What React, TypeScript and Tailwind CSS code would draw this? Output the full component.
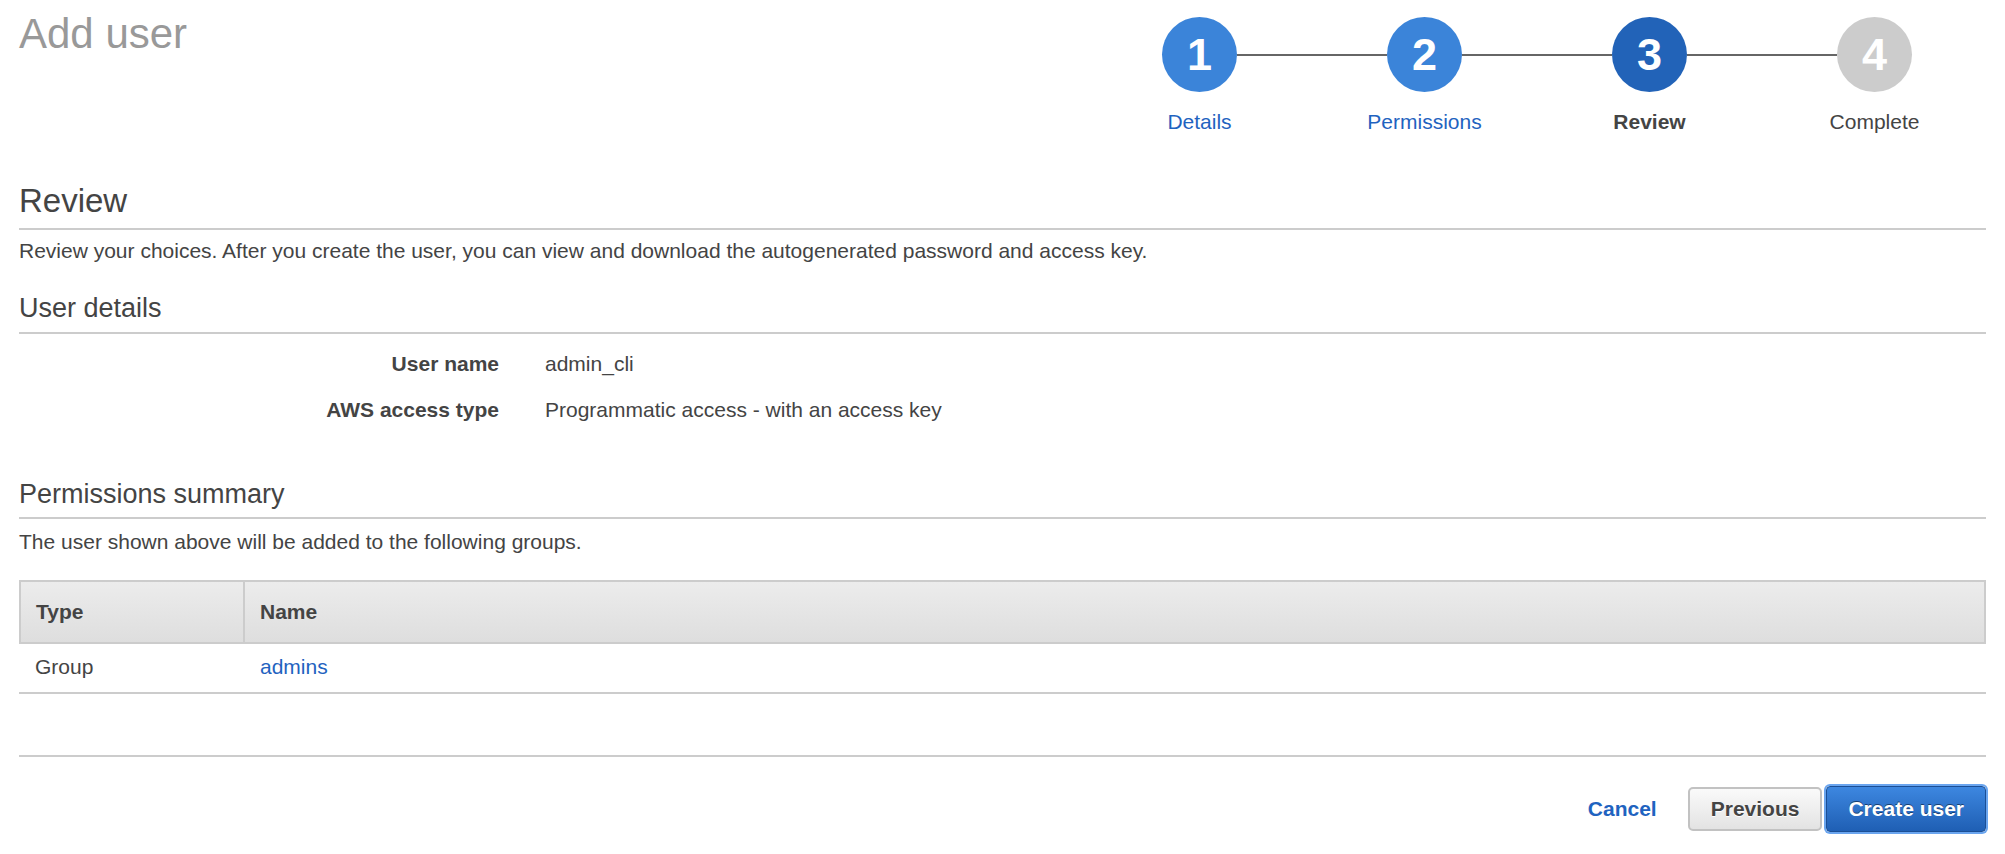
import clsx from 'clsx'

type StepState = 'done' | 'current' | 'todo'

const STEPS: { n: number; label: string; state: StepState }[] = [
  { n: 1, label: 'Details', state: 'done' },
  { n: 2, label: 'Permissions', state: 'done' },
  { n: 3, label: 'Review', state: 'current' },
  { n: 4, label: 'Complete', state: 'todo' },
]

function Stepper() {
  return (
    <div className="flex pt-[17px] -mr-[1px]">
      {STEPS.map((s, i) => (
        <div key={s.n} className="w-[225px] flex flex-col items-center">
          <div className="w-full flex items-center">
            <div className={clsx('flex-1 h-[2px]', i === 0 ? 'bg-transparent' : 'bg-[#666]')} />
            <div
              className={clsx(
                'w-[75px] h-[75px] rounded-full flex items-center justify-center text-white font-bold text-[45px] leading-none',
                s.state === 'done' && 'bg-[#3b84d9]',
                s.state === 'current' && 'bg-[#2263b8]',
                s.state === 'todo' && 'bg-[#cccccc]'
              )}
            >
              {s.n}
            </div>
            <div className={clsx('flex-1 h-[2px]', i === STEPS.length - 1 ? 'bg-transparent' : 'bg-[#666]')} />
          </div>
          <div
            className={clsx(
              'mt-[18px] text-[21px] leading-[24px]',
              s.state === 'done' && 'text-[#1f63c0]',
              s.state === 'current' && 'text-[#444] font-bold',
              s.state === 'todo' && 'text-[#444]'
            )}
          >
            {s.label}
          </div>
        </div>
      ))}
    </div>
  )
}

function SectionHeading({ children, className }: { children: React.ReactNode; className?: string }) {
  return (
    <h2 className={clsx('text-[27px] leading-[32px] font-normal text-[#444] border-b-2 border-[#cccccc]', className)}>
      {children}
    </h2>
  )
}

function DetailRow({ label, value, className }: { label: string; value: string; className?: string }) {
  return (
    <div className={clsx('flex text-[21px] leading-[30px]', className)}>
      <div className="w-[480px] text-right font-bold text-[#444]">{label}</div>
      <div className="pl-[46px] text-[#444]">{value}</div>
    </div>
  )
}

export default function App() {
  return (
    <div className="min-h-screen bg-white px-[19px] text-[#444] font-['Liberation_Sans',Arial,sans-serif]">
      {/* Header: title + wizard steps */}
      <div className="flex justify-between items-start">
        <h1 className="pt-[9px] text-[42px] leading-[50px] font-normal text-[#999]">Add user</h1>
        <Stepper />
      </div>

      {/* Review */}
      <h2 className="mt-[47px] text-[33px] leading-[40px] font-normal text-[#444] pb-[7px] border-b-2 border-[#cccccc]">
        Review
      </h2>
      <p className="mt-[6px] text-[21px] leading-[30px]">
        Review your choices. After you create the user, you can view and download the autogenerated password and access key.
      </p>

      {/* User details */}
      <SectionHeading className="mt-[26px] pb-[8px]">User details</SectionHeading>
      <DetailRow className="mt-[15px]" label="User name" value="admin_cli" />
      <DetailRow className="mt-[16px]" label="AWS access type" value="Programmatic access - with an access key" />

      {/* Permissions summary */}
      <SectionHeading className="mt-[53px] pb-[7px]">Permissions summary</SectionHeading>
      <p className="mt-[8px] text-[21px] leading-[30px]">The user shown above will be added to the following groups.</p>

      <div className="mt-[23px] text-[21px]">
        <div className="flex h-[64px] border-2 border-[#cccccc] bg-gradient-to-b from-[#ececec] to-[#dedede] font-bold text-[#444]">
          <div className="w-[224px] flex items-center pl-[15px] border-r-2 border-[#cccccc]">Type</div>
          <div className="flex-1 flex items-center pl-[15px]">Name</div>
        </div>
        <div className="flex h-[50px] pb-[3px] border-b-2 border-[#cccccc]">
          <div className="w-[226px] flex items-center pl-[16px] text-[#444]">Group</div>
          <div className="flex-1 flex items-center pl-[15px]">
            <a href="#" className="text-[#1f63c0]">admins</a>
          </div>
        </div>
      </div>

      {/* Footer actions */}
      <div className="mt-[61px] border-t-2 border-[#cccccc] pt-[29px] flex justify-end items-center">
        <a href="#" className="text-[21px] font-bold text-[#1f63c0] mr-[31px]">Cancel</a>
        <button className="h-[44px] px-[21px] rounded-[5px] border-2 border-[#c2c2c2] bg-gradient-to-b from-[#fafafa] to-[#e3e3e3] text-[21px] font-bold text-[#444] [text-shadow:0_1px_0_#fff]">
          Previous
        </button>
        <button className="ml-[4px] h-[46px] px-[21px] rounded-[4px] border border-[#1b4f95] ring-2 ring-[#6aa5ef] bg-gradient-to-b from-[#3d87e0] to-[#1f5fb4] text-[21px] font-bold text-white [text-shadow:0_-1px_0_#1a3f70]">
          Create user
        </button>
      </div>
    </div>
  )
}
